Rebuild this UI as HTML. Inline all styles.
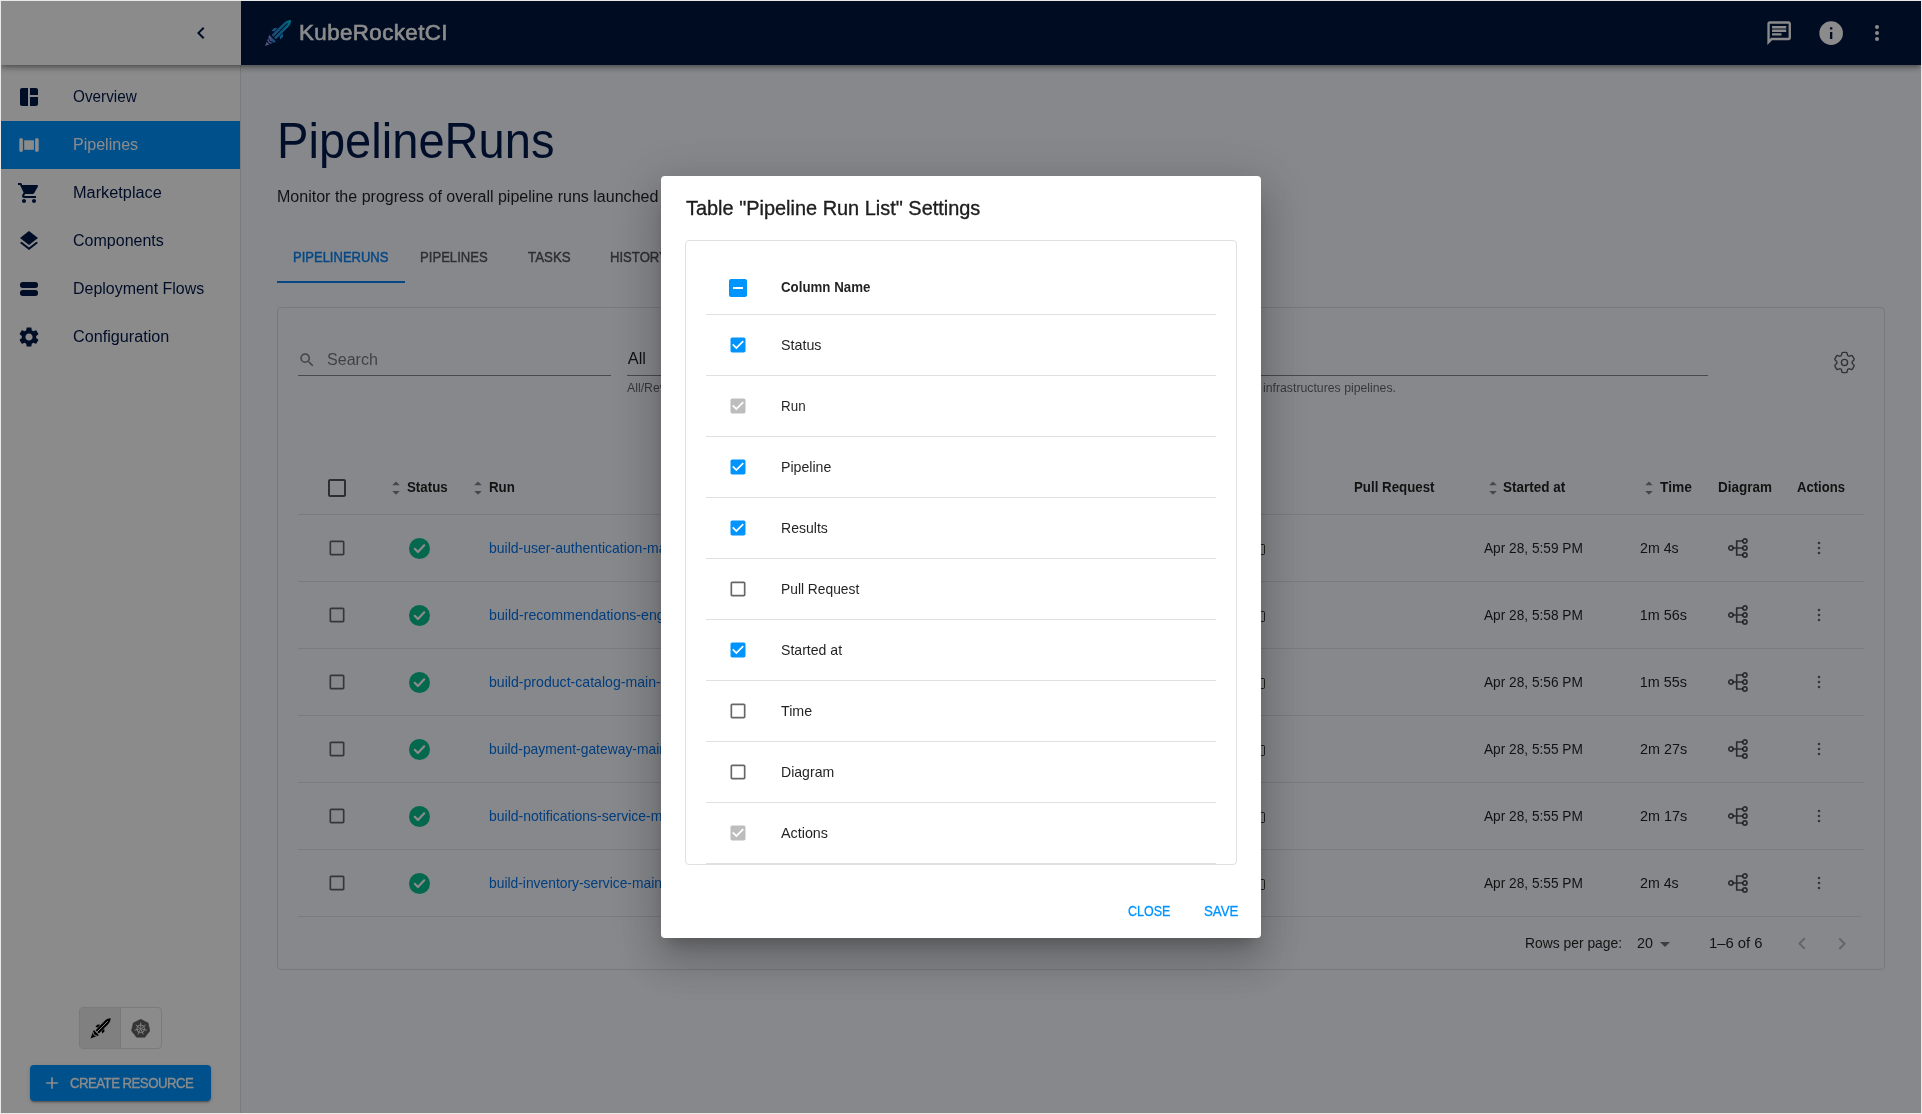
<!DOCTYPE html>
<html lang="en">
<head>
<meta charset="utf-8">
<title>KubeRocketCI - PipelineRuns</title>
<style>
*{box-sizing:border-box;margin:0;padding:0}
html,body{width:1922px;height:1114px;overflow:hidden;background:#e9e9e9}
body{font-family:"Liberation Sans",sans-serif;color:rgba(0,0,0,.87);-webkit-font-smoothing:antialiased}
#app{position:absolute;left:1px;top:1px;width:1920px;height:1112px;overflow:hidden;background:#f8faff;will-change:transform}
.abs{position:absolute}
.t{position:absolute;white-space:nowrap;line-height:1}
/* ---------- sidebar ---------- */
#side{position:absolute;left:0;top:0;width:240px;height:1112px;background:#fff;border-right:1px solid #e2e2e4}
.nav{position:absolute;left:0;width:239px;height:48px}
.nav svg{position:absolute;left:16px;top:12px;width:24px;height:24px;fill:#001848}
.nav span{position:absolute;left:72px;top:-1px;line-height:48px;font-size:16.450px;color:#001848;white-space:nowrap}
.nav.sel{background:#0094ff}
.nav.sel span{color:#fff}
.nav.sel svg{fill:#fff}

/* ---------- main ---------- */
#h1{left:276px;top:115.500px;font-size:49.300px;color:#001a4e;line-height:48px}
#sub{left:276px;top:186px;font-size:16.450px;line-height:18px;color:rgba(0,0,0,.87)}
.tab{position:absolute;top:232px;height:48px;line-height:48px;font-size:14.400px;color:rgba(0,0,0,.6);white-space:nowrap;-webkit-text-stroke:.45px}
#card{position:absolute;left:276px;top:306px;width:1608px;height:663px;border:1px solid #dcdde1;border-radius:4px}
.hl{position:absolute;height:1px;background:#e0e1e5}
.th{position:absolute;top:478px;font-size:14.400px;line-height:16px;font-weight:700;color:rgba(0,0,0,.87);white-space:nowrap}
.td{position:absolute;font-size:14.400px;line-height:16px;color:rgba(0,0,0,.87);white-space:nowrap}
.lnk{color:#0672e8}
.sort{position:absolute;top:479px;width:8px;height:16px;fill:rgba(0,0,0,.48)}
.cb{position:absolute;border:1.6px solid rgba(0,0,0,.6);border-radius:2px;width:15px;height:15px}
.ok{position:absolute;width:21px;height:21px}
.dia{position:absolute;width:20px;height:20px;fill:none;stroke:rgba(0,0,0,.68);stroke-width:1.65}
.mv{position:absolute;width:20px;height:20px;fill:rgba(0,0,0,.6)}
.cp{position:absolute;left:1255px;width:8.5px;height:11px;border:1.5px solid rgba(0,0,0,.75);border-radius:1.5px}
/* ---------- appbar ---------- */
#bar{position:absolute;left:0;top:0;width:1920px;height:64px;background:#fff;box-shadow:0 2px 4px -1px rgba(0,0,0,.28),0 4px 5px 0 rgba(0,0,0,.16),0 1px 10px 0 rgba(0,0,0,.12)}
#barnavy{position:absolute;left:240px;top:0;width:1680px;height:64px;background:#00163e}
/* ---------- overlay + dialog ---------- */
#ov{position:absolute;left:0;top:0;width:1920px;height:1112px;background:rgba(0,0,0,.455)}
#dlg{position:absolute;left:660px;top:175px;width:600px;height:762px;background:#fff;border-radius:4px;box-shadow:0 11px 15px -7px rgba(0,0,0,.2),0 24px 38px 3px rgba(0,0,0,.14),0 9px 46px 8px rgba(0,0,0,.12)}

#dtitle{left:24px;top:21px;font-size:20.600px;line-height:22px;color:rgba(0,0,0,.87);-webkit-text-stroke:.35px}
#panel{position:absolute;left:24px;top:64px;width:552px;height:625px;border:1px solid #e0e0e0;border-radius:4px;overflow:hidden}
.dl{position:absolute;left:20px;width:510px;height:1px;background:#e0e0e0}
.dt{position:absolute;left:95px;font-size:14.400px;line-height:16px;white-space:nowrap;color:rgba(0,0,0,.87)}
.ck{position:absolute;width:20px;height:20px;left:42px}
.btn{position:absolute;top:901px;font-size:14.400px;line-height:16px;color:#0094ff;white-space:nowrap;-webkit-text-stroke:.3px}

#brand{left:299.500px;top:20px;font-size:21.500px;line-height:24px;color:#fff;letter-spacing:.4px;-webkit-text-stroke:.6px}
.bi{position:absolute;fill:#fff}
#tg{position:absolute;left:78px;top:1006px;width:83px;height:42px;border:1px solid #e0e0e0;border-radius:4px;overflow:hidden}
#tg1{position:absolute;left:0;top:0;width:41px;height:40px;background:#ebebeb;border-right:1px solid #dcdcdc}
#cr{position:absolute;left:29px;top:1064px;width:181px;height:36px;background:#0094ff;border-radius:4px;box-shadow:0 3px 1px -2px rgba(0,0,0,.2),0 2px 2px 0 rgba(0,0,0,.14),0 1px 5px 0 rgba(0,0,0,.12)}
#crt{left:40.500px;top:10px;font-size:14.400px;letter-spacing:-.6px;line-height:16px;color:#fff;-webkit-text-stroke:.3px}
</style>
<style id="fit">
#n1{transform:scaleX(0.9307);transform-origin:0 50%;margin-left:-0.07px}
#n2{transform:scaleX(0.9754);transform-origin:0 50%;margin-left:-0.38px}
#n3{transform:scaleX(0.9920);transform-origin:0 50%;margin-left:-0.39px}
#n4{transform:scaleX(0.9745);transform-origin:0 50%;margin-left:-0.18px}
#n5{transform:scaleX(0.9705);transform-origin:0 50%;margin-left:-0.37px}
#n6{transform:scaleX(0.9844);transform-origin:0 50%;margin-left:-0.18px}
#brand{transform:scaleX(1.0386);transform-origin:0 50%;margin-left:-1.46px}
#h1{transform:scaleX(0.9554);transform-origin:0 50%;margin-left:-0.02px}
#tb1{transform:scaleX(0.9038);transform-origin:0 50%;margin-left:0.10px}
#tb2{transform:scaleX(0.9110);transform-origin:0 50%;margin-left:0.19px}
#tb3{transform:scaleX(0.9261);transform-origin:0 50%;margin-left:0.70px}
#srch{transform:scaleX(0.9780);transform-origin:0 50%;margin-left:-0.88px}
#h_st{transform:scaleX(0.9244);transform-origin:0 50%;margin-left:-0.10px}
#h_pr{transform:scaleX(0.9233);transform-origin:0 50%;margin-left:-0.72px}
#h_sa{transform:scaleX(0.9397);transform-origin:0 50%;margin-left:-0.17px}
#h_tm{transform:scaleX(0.9576);transform-origin:0 50%;margin-left:0.00px}
#h_dg{transform:scaleX(0.9351);transform-origin:0 50%;margin-left:-0.59px}
#h_ac{transform:scaleX(0.9087);transform-origin:0 50%;margin-left:-0.03px}
#d0{transform:scaleX(0.9505);transform-origin:0 50%;margin-left:0.30px}
#d1{transform:scaleX(0.9505);transform-origin:0 50%;margin-left:0.30px}
#d2{transform:scaleX(0.9505);transform-origin:0 50%;margin-left:0.30px}
#d3{transform:scaleX(0.9505);transform-origin:0 50%;margin-left:0.30px}
#d4{transform:scaleX(0.9505);transform-origin:0 50%;margin-left:0.30px}
#d5{transform:scaleX(0.9505);transform-origin:0 50%;margin-left:0.30px}
#u0{transform:scaleX(0.9863);transform-origin:0 50%;margin-left:-0.39px}
#u5{transform:scaleX(0.9863);transform-origin:0 50%;margin-left:-0.39px}
#rpp{transform:scaleX(0.9633);transform-origin:0 50%;margin-left:-0.76px}
#p20{transform:scaleX(0.9925);transform-origin:0 50%;margin-left:-0.53px}
#pof{transform:scaleX(1.0302);transform-origin:0 50%;margin-left:-0.55px}
#dtitle{transform:scaleX(0.9674);transform-origin:0 50%;margin-left:0.50px}
#dc0{transform:scaleX(0.9234);transform-origin:0 50%;margin-left:-0.22px}
#dc1{transform:scaleX(0.9922);transform-origin:0 50%;margin-left:0.20px}
#dc2{transform:scaleX(0.9310);transform-origin:0 50%;margin-left:0.20px}
#dc3{transform:scaleX(0.9834);transform-origin:0 50%;margin-left:0.20px}
#dc4{transform:scaleX(0.9759);transform-origin:0 50%;margin-left:0.20px}
#dc5{transform:scaleX(0.9588);transform-origin:0 50%;margin-left:0.20px}
#dc6{transform:scaleX(0.9787);transform-origin:0 50%;margin-left:0.20px}
#dc7{transform:scaleX(0.9903);transform-origin:0 50%;margin-left:0.20px}
#dc8{transform:scaleX(0.9779);transform-origin:0 50%;margin-left:0.20px}
#dc9{transform:scaleX(0.9957);transform-origin:0 50%;margin-left:0.20px}
#help2{transform:scaleX(0.9978);transform-origin:0 50%;margin-left:-0.71px}
#bclose{transform:scaleX(0.8702);transform-origin:0 50%;margin-left:-0.49px}
#bsave{transform:scaleX(0.9240);transform-origin:0 50%;margin-left:-0.19px}
#crt{transform:scaleX(0.9206);transform-origin:0 50%;margin-left:-0.06px}
#sub{transform:scaleX(0.9752);transform-origin:0 50%;margin-left:-0.48px}
#r0{transform:scaleX(0.9734);transform-origin:0 50%;margin-left:-0.47px}
#r1{transform:scaleX(0.9852);transform-origin:0 50%;margin-left:-0.49px}
#r2{transform:scaleX(0.9806);transform-origin:0 50%;margin-left:-0.48px}
#r3{transform:scaleX(0.9632);transform-origin:0 50%;margin-left:-0.46px}
#r4{transform:scaleX(0.9718);transform-origin:0 50%;margin-left:-0.47px}
#r5{transform:scaleX(0.9611);transform-origin:0 50%;margin-left:-0.46px}
#tb4{transform:scaleX(0.9110);transform-origin:0 50%;margin-left:-0.41px}
#h_run{transform:scaleX(0.9244);transform-origin:0 50%;margin-left:-0.42px}
#all{transform:scaleX(1.0000);transform-origin:0 50%;margin-left:0.70px}
#help{transform:scaleX(1.0000);transform-origin:0 50%;margin-left:0.00px}
#u1{transform:scaleX(1.0000);transform-origin:0 50%;margin-left:-0.73px}
#u2{transform:scaleX(1.0000);transform-origin:0 50%;margin-left:-0.73px}
#u3{transform:scaleX(1.0000);transform-origin:0 50%;margin-left:-0.40px}
#u4{transform:scaleX(1.0000);transform-origin:0 50%;margin-left:-0.40px}
</style>
</head>
<body>
<div id="app">

<!-- MAIN -->
<div id="main">
<div class="t" id="h1">PipelineRuns</div>
<div class="t" id="sub">Monitor the progress of overall pipeline runs launched within the platform.</div>
<div class="tab" id="tb1" style="left:292px;color:#0b83f5">PIPELINERUNS</div>
<div class="tab" id="tb2" style="left:419px">PIPELINES</div>
<div class="tab" id="tb3" style="left:526px">TASKS</div>
<div class="tab" id="tb4" style="left:609px">HISTORY</div>
<div class="abs" style="left:276px;top:280px;width:128px;height:2px;background:#0b83f5"></div>
<div id="card"></div>
<svg class="abs" style="left:296.800px;top:349.800px;width:18px;height:18px;fill:rgba(0,0,0,.5)" viewBox="0 0 24 24"><path d="M15.5 14h-.79l-.28-.27A6.471 6.471 0 0 0 16 9.500 6.500 6.500 0 1 0 9.500 16c1.610 0 3.090-.59 4.230-1.570l.27.28v.79l5 4.990L20.490 19l-4.990-5zm-6 0C7.010 14 5 11.990 5 9.500S7.010 5 9.500 5 14 7.010 14 9.500 11.990 14 9.500 14z"/></svg>
<div class="t" id="srch" style="left:327px;top:349px;font-size:16.450px;line-height:18px;color:rgba(0,0,0,.53)">Search</div>
<div class="hl" style="left:297px;top:374px;width:313px;background:rgba(0,0,0,.46)"></div>
<div class="t" id="all" style="left:626px;top:348px;font-size:16.450px;line-height:18px">All</div>
<div class="hl" style="left:626px;top:374px;width:1081px;background:rgba(0,0,0,.46)"></div>
<div class="t" id="help" style="left:626px;top:380px;font-size:12.300px;line-height:14px;color:rgba(0,0,0,.6)">All/Review/Build/Deploy/Clean/Security/Release/Tests pipelines. Review and build pipelines are application</div>
<div class="t" id="help2" style="left:1263px;top:380px;font-size:12.300px;line-height:14px;color:rgba(0,0,0,.6)">infrastructures pipelines.</div>
<svg id="gear" class="abs" style="left:1829.700px;top:348.300px;width:27px;height:27px;fill:none;stroke:rgba(0,0,0,.64);stroke-width:1.200;stroke-linejoin:round;stroke-linecap:round" viewBox="0 0 24 24"><path d="M9.594 3.940c.09-.542.56-.94 1.110-.94h2.593c.55 0 1.020.398 1.110.94l.213 1.281c.063.374.313.686.645.87.074.04.147.083.22.127.324.196.72.257 1.075.124l1.217-.456a1.125 1.125 0 011.370.49l1.296 2.247a1.125 1.125 0 01-.26 1.431l-1.003.827c-.293.24-.438.613-.431.992a6.759 6.759 0 010 .255c-.007.378.138.75.43.99l1.005.828c.424.35.534.954.26 1.430l-1.298 2.247a1.125 1.125 0 01-1.369.491l-1.217-.456c-.355-.133-.75-.072-1.076.124a6.570 6.570 0 01-.22.128c-.331.183-.581.495-.644.869l-.213 1.280c-.09.543-.56.941-1.110.941h-2.594c-.55 0-1.020-.398-1.110-.94l-.213-1.281c-.062-.374-.312-.686-.644-.87a6.520 6.520 0 01-.22-.127c-.325-.196-.72-.257-1.076-.124l-1.217.456a1.125 1.125 0 01-1.369-.49l-1.297-2.247a1.125 1.125 0 01.26-1.431l1.004-.827c.292-.24.437-.613.43-.992a6.932 6.932 0 010-.255c.007-.378-.138-.75-.43-.99l-1.004-.828a1.125 1.125 0 01-.26-1.430l1.297-2.247a1.125 1.125 0 011.370-.491l1.216.456c.356.133.751.072 1.076-.124.072-.044.146-.087.22-.128.332-.183.582-.495.644-.869l.214-1.281z"/><circle cx="12" cy="12" r="2.750"/></svg>
<svg class="abs" style="left:324px;top:475px;width:24px;height:24px;fill:rgba(0,0,0,.66)" viewBox="0 0 24 24"><path d="M19 5v14H5V5h14m0-2H5c-1.100 0-2 .9-2 2v14c0 1.100.9 2 2 2h14c1.100 0 2-.9 2-2V5c0-1.100-.9-2-2-2z"/></svg>
<svg class="sort" style="left:391px" viewBox="0 0 8 16"><path d="M4 1.400L7.800 5.200H.2zM4 14.700L.2 10.900h7.600z"/></svg>
<div class="th" id="h_st" style="left:406px">Status</div>
<svg class="sort" style="left:473px" viewBox="0 0 8 16"><path d="M4 1.400L7.800 5.200H.2zM4 14.700L.2 10.900h7.600z"/></svg>
<div class="th" id="h_run" style="left:488px">Run</div>
<svg class="sort" style="left:700px" viewBox="0 0 8 16"><path d="M4 1.400L7.800 5.200H.2zM4 14.700L.2 10.900h7.600z"/></svg>
<div class="th" id="h_pl" style="left:715px">Pipeline</div>
<div class="th" id="h_res" style="left:1110px">Results</div>
<div class="th" id="h_pr" style="left:1354px">Pull Request</div>
<svg class="sort" style="left:1488px" viewBox="0 0 8 16"><path d="M4 1.400L7.800 5.200H.2zM4 14.700L.2 10.900h7.600z"/></svg>
<div class="th" id="h_sa" style="left:1502.500px">Started at</div>
<svg class="sort" style="left:1644px" viewBox="0 0 8 16"><path d="M4 1.400L7.800 5.200H.2zM4 14.700L.2 10.900h7.600z"/></svg>
<div class="th" id="h_tm" style="left:1659px">Time</div>
<div class="th" id="h_dg" style="left:1717.500px">Diagram</div>
<div class="th" id="h_ac" style="left:1796px">Actions</div>
<div class="hl" style="left:297px;top:513px;width:1566px"></div>
<svg class="abs" style="left:326px;top:537px;width:20px;height:20px;fill:rgba(0,0,0,.6)" viewBox="0 0 24 24"><path d="M19 5v14H5V5h14m0-2H5c-1.100 0-2 .9-2 2v14c0 1.100.9 2 2 2h14c1.100 0 2-.9 2-2V5c0-1.100-.9-2-2-2z"/></svg>
<svg class="ok" style="left:408px;top:537px" viewBox="0 0 20 20"><circle cx="10" cy="10" r="10" fill="#08bf8f"/><path d="M5.500 10.300l3 3 6-6.300" fill="none" stroke="#fff" stroke-width="2.100" stroke-linecap="round" stroke-linejoin="round"/></svg>
<div class="td lnk" id="r0" style="left:488px;top:539px">build-user-authentication-main-x7k2p</div>
<div class="cp" style="top:542.5px"></div>
<div class="td" id="d0" style="left:1483px;top:539px">Apr 28, 5:59 PM</div>
<div class="td" id="u0" style="left:1639.500px;top:539px">2m 4s</div>
<svg class="dia" style="left:1727px;top:537px" viewBox="0 0 20 20"><circle cx="2.900" cy="10" r="2.100"/><circle cx="16.900" cy="3" r="2.100"/><circle cx="16.900" cy="10" r="2.100"/><circle cx="16.900" cy="17" r="2.100"/><path d="M5 10h9.800M14.800 3H8.700v14h6.100"/></svg>
<svg class="mv" style="left:1808px;top:537px" viewBox="0 0 20 20"><circle cx="10" cy="5" r="1.300"/><circle cx="10" cy="10" r="1.300"/><circle cx="10" cy="15" r="1.300"/></svg>
<div class="hl" style="left:297px;top:580px;width:1566px"></div>
<svg class="abs" style="left:326px;top:604px;width:20px;height:20px;fill:rgba(0,0,0,.6)" viewBox="0 0 24 24"><path d="M19 5v14H5V5h14m0-2H5c-1.100 0-2 .9-2 2v14c0 1.100.9 2 2 2h14c1.100 0 2-.9 2-2V5c0-1.100-.9-2-2-2z"/></svg>
<svg class="ok" style="left:408px;top:604px" viewBox="0 0 20 20"><circle cx="10" cy="10" r="10" fill="#08bf8f"/><path d="M5.500 10.300l3 3 6-6.300" fill="none" stroke="#fff" stroke-width="2.100" stroke-linecap="round" stroke-linejoin="round"/></svg>
<div class="td lnk" id="r1" style="left:488px;top:606px">build-recommendations-engine-main-m4q9z</div>
<div class="cp" style="top:609.5px"></div>
<div class="td" id="d1" style="left:1483px;top:606px">Apr 28, 5:58 PM</div>
<div class="td" id="u1" style="left:1639.500px;top:606px">1m 56s</div>
<svg class="dia" style="left:1727px;top:604px" viewBox="0 0 20 20"><circle cx="2.900" cy="10" r="2.100"/><circle cx="16.900" cy="3" r="2.100"/><circle cx="16.900" cy="10" r="2.100"/><circle cx="16.900" cy="17" r="2.100"/><path d="M5 10h9.800M14.800 3H8.700v14h6.100"/></svg>
<svg class="mv" style="left:1808px;top:604px" viewBox="0 0 20 20"><circle cx="10" cy="5" r="1.300"/><circle cx="10" cy="10" r="1.300"/><circle cx="10" cy="15" r="1.300"/></svg>
<div class="hl" style="left:297px;top:647px;width:1566px"></div>
<svg class="abs" style="left:326px;top:671px;width:20px;height:20px;fill:rgba(0,0,0,.6)" viewBox="0 0 24 24"><path d="M19 5v14H5V5h14m0-2H5c-1.100 0-2 .9-2 2v14c0 1.100.9 2 2 2h14c1.100 0 2-.9 2-2V5c0-1.100-.9-2-2-2z"/></svg>
<svg class="ok" style="left:408px;top:671px" viewBox="0 0 20 20"><circle cx="10" cy="10" r="10" fill="#08bf8f"/><path d="M5.500 10.300l3 3 6-6.300" fill="none" stroke="#fff" stroke-width="2.100" stroke-linecap="round" stroke-linejoin="round"/></svg>
<div class="td lnk" id="r2" style="left:488px;top:673px">build-product-catalog-main-t8w3c</div>
<div class="cp" style="top:676.5px"></div>
<div class="td" id="d2" style="left:1483px;top:673px">Apr 28, 5:56 PM</div>
<div class="td" id="u2" style="left:1639.500px;top:673px">1m 55s</div>
<svg class="dia" style="left:1727px;top:671px" viewBox="0 0 20 20"><circle cx="2.900" cy="10" r="2.100"/><circle cx="16.900" cy="3" r="2.100"/><circle cx="16.900" cy="10" r="2.100"/><circle cx="16.900" cy="17" r="2.100"/><path d="M5 10h9.800M14.800 3H8.700v14h6.100"/></svg>
<svg class="mv" style="left:1808px;top:671px" viewBox="0 0 20 20"><circle cx="10" cy="5" r="1.300"/><circle cx="10" cy="10" r="1.300"/><circle cx="10" cy="15" r="1.300"/></svg>
<div class="hl" style="left:297px;top:714px;width:1566px"></div>
<svg class="abs" style="left:326px;top:738px;width:20px;height:20px;fill:rgba(0,0,0,.6)" viewBox="0 0 24 24"><path d="M19 5v14H5V5h14m0-2H5c-1.100 0-2 .9-2 2v14c0 1.100.9 2 2 2h14c1.100 0 2-.9 2-2V5c0-1.100-.9-2-2-2z"/></svg>
<svg class="ok" style="left:408px;top:738px" viewBox="0 0 20 20"><circle cx="10" cy="10" r="10" fill="#08bf8f"/><path d="M5.500 10.300l3 3 6-6.300" fill="none" stroke="#fff" stroke-width="2.100" stroke-linecap="round" stroke-linejoin="round"/></svg>
<div class="td lnk" id="r3" style="left:488px;top:740px">build-payment-gateway-main-j5r1v</div>
<div class="cp" style="top:743.5px"></div>
<div class="td" id="d3" style="left:1483px;top:740px">Apr 28, 5:55 PM</div>
<div class="td" id="u3" style="left:1639.500px;top:740px">2m 27s</div>
<svg class="dia" style="left:1727px;top:738px" viewBox="0 0 20 20"><circle cx="2.900" cy="10" r="2.100"/><circle cx="16.900" cy="3" r="2.100"/><circle cx="16.900" cy="10" r="2.100"/><circle cx="16.900" cy="17" r="2.100"/><path d="M5 10h9.800M14.800 3H8.700v14h6.100"/></svg>
<svg class="mv" style="left:1808px;top:738px" viewBox="0 0 20 20"><circle cx="10" cy="5" r="1.300"/><circle cx="10" cy="10" r="1.300"/><circle cx="10" cy="15" r="1.300"/></svg>
<div class="hl" style="left:297px;top:781px;width:1566px"></div>
<svg class="abs" style="left:326px;top:805px;width:20px;height:20px;fill:rgba(0,0,0,.6)" viewBox="0 0 24 24"><path d="M19 5v14H5V5h14m0-2H5c-1.100 0-2 .9-2 2v14c0 1.100.9 2 2 2h14c1.100 0 2-.9 2-2V5c0-1.100-.9-2-2-2z"/></svg>
<svg class="ok" style="left:408px;top:805px" viewBox="0 0 20 20"><circle cx="10" cy="10" r="10" fill="#08bf8f"/><path d="M5.500 10.300l3 3 6-6.300" fill="none" stroke="#fff" stroke-width="2.100" stroke-linecap="round" stroke-linejoin="round"/></svg>
<div class="td lnk" id="r4" style="left:488px;top:807px">build-notifications-service-main-h2n6d</div>
<div class="cp" style="top:810.5px"></div>
<div class="td" id="d4" style="left:1483px;top:807px">Apr 28, 5:55 PM</div>
<div class="td" id="u4" style="left:1639.500px;top:807px">2m 17s</div>
<svg class="dia" style="left:1727px;top:805px" viewBox="0 0 20 20"><circle cx="2.900" cy="10" r="2.100"/><circle cx="16.900" cy="3" r="2.100"/><circle cx="16.900" cy="10" r="2.100"/><circle cx="16.900" cy="17" r="2.100"/><path d="M5 10h9.800M14.800 3H8.700v14h6.100"/></svg>
<svg class="mv" style="left:1808px;top:805px" viewBox="0 0 20 20"><circle cx="10" cy="5" r="1.300"/><circle cx="10" cy="10" r="1.300"/><circle cx="10" cy="15" r="1.300"/></svg>
<div class="hl" style="left:297px;top:848px;width:1566px"></div>
<svg class="abs" style="left:326px;top:872px;width:20px;height:20px;fill:rgba(0,0,0,.6)" viewBox="0 0 24 24"><path d="M19 5v14H5V5h14m0-2H5c-1.100 0-2 .9-2 2v14c0 1.100.9 2 2 2h14c1.100 0 2-.9 2-2V5c0-1.100-.9-2-2-2z"/></svg>
<svg class="ok" style="left:408px;top:872px" viewBox="0 0 20 20"><circle cx="10" cy="10" r="10" fill="#08bf8f"/><path d="M5.500 10.300l3 3 6-6.300" fill="none" stroke="#fff" stroke-width="2.100" stroke-linecap="round" stroke-linejoin="round"/></svg>
<div class="td lnk" id="r5" style="left:488px;top:874px">build-inventory-service-main-b9f4s</div>
<div class="cp" style="top:877.5px"></div>
<div class="td" id="d5" style="left:1483px;top:874px">Apr 28, 5:55 PM</div>
<div class="td" id="u5" style="left:1639.500px;top:874px">2m 4s</div>
<svg class="dia" style="left:1727px;top:872px" viewBox="0 0 20 20"><circle cx="2.900" cy="10" r="2.100"/><circle cx="16.900" cy="3" r="2.100"/><circle cx="16.900" cy="10" r="2.100"/><circle cx="16.900" cy="17" r="2.100"/><path d="M5 10h9.800M14.800 3H8.700v14h6.100"/></svg>
<svg class="mv" style="left:1808px;top:872px" viewBox="0 0 20 20"><circle cx="10" cy="5" r="1.300"/><circle cx="10" cy="10" r="1.300"/><circle cx="10" cy="15" r="1.300"/></svg>
<div class="hl" style="left:297px;top:915px;width:1563px"></div>
<div class="td" id="rpp" style="left:1525px;top:934px">Rows per page:</div>
<div class="td" id="p20" style="left:1637px;top:934px">20</div>
<svg class="abs" style="left:1652px;top:931px;width:24px;height:24px;fill:rgba(0,0,0,.54)" viewBox="0 0 24 24"><path d="M7 10l5 5 5-5z"/></svg>
<div class="td" id="pof" style="left:1708.500px;top:934px">1–6 of 6</div>
<svg class="abs" style="left:1788.500px;top:931px;width:24px;height:24px;fill:rgba(0,0,0,.26)" viewBox="0 0 24 24"><path d="M15.41 16.090l-4.580-4.590 4.580-4.590L14 5.500l-6 6 6 6z"/></svg>
<svg class="abs" style="left:1829px;top:931px;width:24px;height:24px;fill:rgba(0,0,0,.26)" viewBox="0 0 24 24"><path d="M8.590 16.340l4.580-4.590-4.580-4.590L10 5.750l6 6-6 6z"/></svg>
</div>

<!-- SIDEBAR -->
<div id="side">
<div class="nav" style="top:72px"><svg viewBox="0 0 24 24"><path d="M11 21H5c-1.1 0-2-.9-2-2V5c0-1.1.9-2 2-2h6zm2 0h6c1.1 0 2-.9 2-2v-7h-8zm8-11V5c0-1.1-.9-2-2-2h-6v7z"/></svg><span id="n1">Overview</span></div>
<div class="nav sel" style="top:120px"><svg viewBox="0 0 24 24"><rect x="2.3" y="4.9" width="3.6" height="14.2" rx="1.8"/><rect x="7.2" y="7.3" width="9.7" height="9.5"/><rect x="18.1" y="4.9" width="3.6" height="14.2" rx="1.8"/></svg><span id="n2">Pipelines</span></div>
<div class="nav" style="top:168px"><svg viewBox="0 0 24 24"><path d="M7 18c-1.1 0-1.99.9-1.99 2S5.900 22 7 22s2-.9 2-2-.9-2-2-2zM1 2v2h2l3.600 7.590-1.350 2.450c-.16.28-.25.61-.25.96 0 1.100.9 2 2 2h12v-2H7.420c-.14 0-.25-.11-.25-.25l.03-.12.9-1.630h7.450c.75 0 1.410-.41 1.750-1.030l3.580-6.490c.08-.14.12-.31.12-.48 0-.55-.45-1-1-1H5.210l-.94-2H1zm16 16c-1.100 0-1.990.9-1.990 2s.89 2 1.990 2 2-.9 2-2-.9-2-2-2z"/></svg><span id="n3">Marketplace</span></div>
<div class="nav" style="top:216px"><svg viewBox="0 0 24 24"><path d="M11.99 18.540l-7.370-5.730L3 14.070l9 7 9-7-1.630-1.270-7.380 5.740zM12 16l7.360-5.730L21 9l-9-7-9 7 1.630 1.270L12 16z"/></svg><span id="n4">Components</span></div>
<div class="nav" style="top:264px"><svg viewBox="0 0 24 24"><rect x="3" y="5" width="18" height="6" rx="2.7"/><rect x="3" y="13" width="18" height="6" rx="2.7"/></svg><span id="n5">Deployment Flows</span></div>
<div class="nav" style="top:312px"><svg viewBox="0 0 24 24"><path d="M19.140 12.940c.04-.3.06-.61.06-.94 0-.32-.02-.64-.07-.94l2.030-1.580c.18-.14.23-.41.12-.61l-1.920-3.320c-.12-.22-.37-.29-.59-.22l-2.390.96c-.5-.38-1.030-.7-1.620-.94l-.36-2.540c-.04-.24-.24-.41-.48-.41h-3.840c-.24 0-.43.17-.47.41l-.36 2.540c-.59.24-1.130.57-1.620.94l-2.390-.96c-.22-.08-.47 0-.59.22L2.740 8.870c-.12.21-.08.47.12.61l2.030 1.580c-.05.3-.09.63-.09.94s.02.64.07.94l-2.030 1.580c-.18.14-.23.41-.12.61l1.920 3.320c.12.22.37.29.59.22l2.390-.96c.5.38 1.030.7 1.620.94l.36 2.540c.05.24.24.41.48.41h3.840c.24 0 .44-.17.47-.41l.36-2.540c.59-.24 1.130-.56 1.620-.94l2.390.96c.22.08.47 0 .59-.22l1.920-3.320c.12-.22.07-.47-.12-.61l-2.010-1.580zM12 15.600c-1.980 0-3.600-1.620-3.600-3.600s1.620-3.600 3.600-3.600 3.600 1.620 3.600 3.600-1.620 3.600-3.600 3.600z"/></svg><span id="n6">Configuration</span></div>
<div id="tg"><div id="tg1"></div>
<svg class="abs" style="left:4.500px;top:4.500px;width:31px;height:31px;fill:#000" viewBox="0 0 40 40"><g transform="rotate(45 20 20)">
<path d="M20 1.500c2.300 2.200 3 4.800 3 8V26h-6V9.500c0-3.200.7-5.800 3-8z"/>
<path d="M16.400 16.800l-2.700 2.300v3.900l2.700-1.400zM23.600 16.800l2.700 2.300v3.900l-2.700-1.400z"/>
<path d="M15.300 27.500h9.400L20 38.300z"/>
</g><g transform="rotate(45 20 20)" stroke="#ebebeb" fill="none"><path d="M20 6.500V27" stroke-width="1.200"/><path d="M16.800 30l3.200 1.900 3.200-1.900" stroke-width="1.100"/></g></svg>
<svg class="abs" style="left:51px;top:10.600px;width:19.400px;height:19.400px" viewBox="0 0 20 20"><path d="M10 .3l7.600 3.700 1.900 8.200-5.300 6.600H5.800L.5 12.200l1.900-8.200z" fill="#606060" stroke="#606060" stroke-width=".6" stroke-linejoin="round"/><g stroke="#f2f2f2" fill="none" stroke-width=".95"><circle cx="10" cy="10.100" r="4"/><path d="M10.00 8.80L10.00 3.60M11.02 9.29L15.08 6.05M11.27 10.39L16.34 11.55M10.56 11.27L12.82 15.96M9.44 11.27L7.18 15.96M8.73 10.39L3.66 11.55M8.98 9.29L4.92 6.05"/></g><circle cx="10" cy="10.100" r="1.100" fill="#f2f2f2"/></svg>
</div>
<div id="cr"><svg class="abs" style="left:12px;top:8px;width:20px;height:20px;fill:#fff" viewBox="0 0 24 24"><path d="M19 13h-6v6h-2v-6H5v-2h6V5h2v6h6v2z"/></svg><div class="t" id="crt">CREATE RESOURCE</div></div>
</div>

<!-- APPBAR -->
<div id="bar">
<svg class="abs" style="left:188px;top:20px;width:24px;height:24px;fill:#001848" viewBox="0 0 24 24"><path d="M15.41 7.41L14 6l-6 6 6 6 1.41-1.410L10.83 12z"/></svg>
<div id="barnavy"></div>
<svg class="abs" style="left:257px;top:12px;width:40px;height:40px" viewBox="0 0 40 40"><defs><linearGradient id="rg" gradientUnits="userSpaceOnUse" x1="33" y1="7" x2="7" y2="33"><stop offset="0" stop-color="#00e0e0"/><stop offset=".35" stop-color="#13a0e8"/><stop offset=".68" stop-color="#3a8ee8"/><stop offset=".72" stop-color="#a09af0"/><stop offset="1" stop-color="#b0a4f8"/></linearGradient></defs><g fill="url(#rg)"><g transform="rotate(45 20 20)">
<path d="M20 1.500c2.300 2.200 3 4.800 3 8V26h-6V9.500c0-3.200.7-5.800 3-8z"/>
<path d="M16.400 16.800l-2.700 2.300v3.900l2.700-1.400zM23.600 16.800l2.700 2.300v3.900l-2.700-1.400z"/>
<path d="M15.300 27.500h9.400L20 38.300z"/>
</g></g>
<g transform="rotate(45 20 20)" stroke="#00163e" fill="none"><path d="M20 6.500V27" stroke-width="1"/><path d="M16.800 30l3.200 1.900 3.200-1.900M18 33.100l2 1.100 2-1.100" stroke-width=".9"/></g></svg>
<div class="t" id="brand">KubeRocketCI</div>
<svg class="bi" style="left:1764px;top:18px;width:28.300px;height:28.300px" viewBox="0 0 24 24"><path d="M4 4h16v12H5.170L4 17.170V4m0-2c-1.100 0-1.990.9-1.990 2L2 22l4-4h14c1.100 0 2-.9 2-2V4c0-1.100-.9-2-2-2H4zm2 10h8v2H6v-2zm0-3h12v2H6V9zm0-3h12v2H6V6z"/></svg>
<svg class="bi" style="left:1816px;top:18px;width:28.300px;height:28.300px" viewBox="0 0 24 24"><path d="M13 9h-2V7h2m0 10h-2v-6h2m-1-9A10 10 0 0 0 2 12a10 10 0 0 0 10 10 10 10 0 0 0 10-10A10 10 0 0 0 12 2z"/></svg>
<svg class="bi" style="left:1864px;top:20px;width:24px;height:24px" viewBox="0 0 24 24"><circle cx="12" cy="6" r="2"/><circle cx="12" cy="12" r="2"/><circle cx="12" cy="18" r="2"/></svg>
</div>

<!-- OVERLAY -->
<div id="ov"></div>

<!-- DIALOG -->
<div id="dlg">
<div class="t" id="dtitle">Table "Pipeline Run List" Settings</div>
<div id="panel">
<svg class="ck" style="left:40px;top:35px;width:24px;height:24px;fill:#0094ff" viewBox="0 0 24 24"><path d="M19 3H5c-1.100 0-2 .9-2 2v14c0 1.100.9 2 2 2h14c1.100 0 2-.9 2-2V5c0-1.100-.9-2-2-2zm-2 10H7v-2h10v2z"/></svg>
<div class="dt" id="dc0" style="top:38px;font-weight:700">Column Name</div>
<div class="dl" style="top:73px"></div>
<svg class="ck" style="top:94px;fill:#0094ff" viewBox="0 0 24 24"><path d="M19 3H5c-1.110 0-2 .9-2 2v14c0 1.100.89 2 2 2h14c1.110 0 2-.9 2-2V5c0-1.100-.89-2-2-2zm-9 14l-5-5 1.410-1.410L10 14.170l7.590-7.590L19 8l-9 9z"/></svg>
<div class="dt" id="dc1" style="top:96px">Status</div>
<div class="dl" style="top:134px"></div>
<svg class="ck" style="top:155px;fill:rgba(0,0,0,.26)" viewBox="0 0 24 24"><path d="M19 3H5c-1.110 0-2 .9-2 2v14c0 1.100.89 2 2 2h14c1.110 0 2-.9 2-2V5c0-1.100-.89-2-2-2zm-9 14l-5-5 1.410-1.410L10 14.170l7.590-7.590L19 8l-9 9z"/></svg>
<div class="dt" id="dc2" style="top:157px">Run</div>
<div class="dl" style="top:195px"></div>
<svg class="ck" style="top:216px;fill:#0094ff" viewBox="0 0 24 24"><path d="M19 3H5c-1.110 0-2 .9-2 2v14c0 1.100.89 2 2 2h14c1.110 0 2-.9 2-2V5c0-1.100-.89-2-2-2zm-9 14l-5-5 1.410-1.410L10 14.170l7.590-7.590L19 8l-9 9z"/></svg>
<div class="dt" id="dc3" style="top:218px">Pipeline</div>
<div class="dl" style="top:256px"></div>
<svg class="ck" style="top:277px;fill:#0094ff" viewBox="0 0 24 24"><path d="M19 3H5c-1.110 0-2 .9-2 2v14c0 1.100.89 2 2 2h14c1.110 0 2-.9 2-2V5c0-1.100-.89-2-2-2zm-9 14l-5-5 1.410-1.410L10 14.170l7.590-7.590L19 8l-9 9z"/></svg>
<div class="dt" id="dc4" style="top:279px">Results</div>
<div class="dl" style="top:317px"></div>
<svg class="ck" style="top:338px;fill:rgba(0,0,0,.6)" viewBox="0 0 24 24"><path d="M19 5v14H5V5h14m0-2H5c-1.100 0-2 .9-2 2v14c0 1.100.9 2 2 2h14c1.100 0 2-.9 2-2V5c0-1.100-.9-2-2-2z"/></svg>
<div class="dt" id="dc5" style="top:340px">Pull Request</div>
<div class="dl" style="top:378px"></div>
<svg class="ck" style="top:399px;fill:#0094ff" viewBox="0 0 24 24"><path d="M19 3H5c-1.110 0-2 .9-2 2v14c0 1.100.89 2 2 2h14c1.110 0 2-.9 2-2V5c0-1.100-.89-2-2-2zm-9 14l-5-5 1.410-1.410L10 14.170l7.590-7.590L19 8l-9 9z"/></svg>
<div class="dt" id="dc6" style="top:401px">Started at</div>
<div class="dl" style="top:439px"></div>
<svg class="ck" style="top:460px;fill:rgba(0,0,0,.6)" viewBox="0 0 24 24"><path d="M19 5v14H5V5h14m0-2H5c-1.100 0-2 .9-2 2v14c0 1.100.9 2 2 2h14c1.100 0 2-.9 2-2V5c0-1.100-.9-2-2-2z"/></svg>
<div class="dt" id="dc7" style="top:462px">Time</div>
<div class="dl" style="top:500px"></div>
<svg class="ck" style="top:521px;fill:rgba(0,0,0,.6)" viewBox="0 0 24 24"><path d="M19 5v14H5V5h14m0-2H5c-1.100 0-2 .9-2 2v14c0 1.100.9 2 2 2h14c1.100 0 2-.9 2-2V5c0-1.100-.9-2-2-2z"/></svg>
<div class="dt" id="dc8" style="top:523px">Diagram</div>
<div class="dl" style="top:561px"></div>
<svg class="ck" style="top:582px;fill:rgba(0,0,0,.26)" viewBox="0 0 24 24"><path d="M19 3H5c-1.110 0-2 .9-2 2v14c0 1.100.89 2 2 2h14c1.110 0 2-.9 2-2V5c0-1.100-.89-2-2-2zm-9 14l-5-5 1.410-1.410L10 14.170l7.590-7.590L19 8l-9 9z"/></svg>
<div class="dt" id="dc9" style="top:584px">Actions</div>
<div class="dl" style="top:622px"></div>
</div>
<div class="btn" id="bclose" style="left:467px;top:727px">CLOSE</div>
<div class="btn" id="bsave" style="left:543px;top:727px">SAVE</div>
</div>

</div>
</body>
</html>
